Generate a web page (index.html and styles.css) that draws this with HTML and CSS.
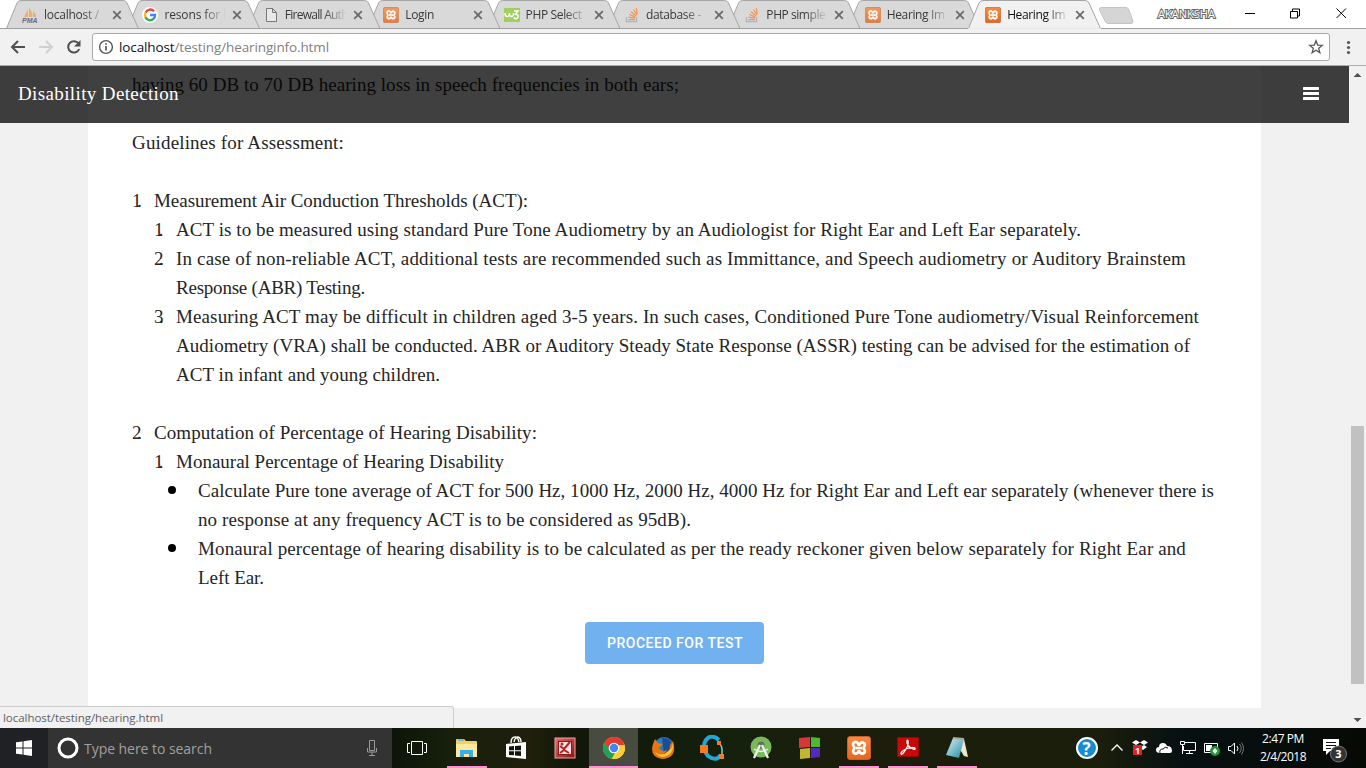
FILE: index.html
```html
<!DOCTYPE html>
<html lang="en">
<head>
<meta charset="utf-8">
<title>Hearing Impairment</title>
<link rel="stylesheet" href="styles.css">
</head>
<body>
<svg class="defs" width="0" height="0" aria-hidden="true">
  <defs>
    <linearGradient id="redg" x2="1" y2="1"><stop stop-color="#e66"/><stop offset="1" stop-color="#8c1414"/></linearGradient>
    <linearGradient id="org" x2="0" y2="1"><stop stop-color="#fb8a3c"/><stop offset="1" stop-color="#e8661b"/></linearGradient>
    <linearGradient id="note" x2="1" y2="1"><stop stop-color="#d9f2f6"/><stop offset=".6" stop-color="#6bb5c4"/><stop offset="1" stop-color="#2f7f94"/></linearGradient>
    <symbol id="xampp" viewBox="0 0 24 24">
      <rect x=".5" y=".5" width="23" height="23" rx="2.5" fill="url(#org)" stroke="#bf6430"/>
      <path d="M7.5 6.2a2.6 2.6 0 0 1 3.6 1.7c.3 1.4 1.5 1.4 1.8 0a2.6 2.6 0 0 1 4.9 1.5c-.2 1.4-1.3 1.5-1.3 2.6s1.1 1.200 1.300 2.600a2.600 2.600 0 0 1-4.900 1.500c-.3-1.400-1.500-1.400-1.800 0a2.600 2.600 0 0 1-4.900-1.500c.2-1.400 1.300-1.500 1.300-2.600s-1.100-1.200-1.300-2.600a2.600 2.600 0 0 1 1.300-3.200z" fill="none" stroke="#fff" stroke-width="2.700"/>
      <path d="M9 12h6" stroke="#fff" stroke-width="2.600"/>
    </symbol>
    <symbol id="stack" viewBox="0 0 16 16">
      <path d="M2.500 10v4.500h10V10" fill="none" stroke="#b3b3b3" stroke-width="1.300"/>
      <path d="M4.500 12.500h6.500M4.600 10.200l6.300 1M5.300 7.500l5.900 2.400M7 4.700l4.900 4M9.500 2.500l3.300 5.200M12.300 1.200l1 5.800" stroke="#f49350" stroke-width="1.200"/>
    </symbol>
    <symbol id="close" viewBox="0 0 10 10"><path d="M1.200 1.200l7.600 7.600M8.800 1.200L1.200 8.800" stroke="#686868" stroke-width="1.700"/></symbol>
    <path id="tab" d="M.5 28.500L11 3Q12.300.500 15 .500H117Q119.800.500 121 3L132.500 28.500" stroke="#a5a5a5"/>
  </defs>
</svg>

<div class="screen">
  <header class="strip">
    <svg class="shapes" width="1366" height="29" fill="#d9d9d9">
      <path d="M0 28.500H1366" stroke="#a0a0a0"/>
      <use href="#tab" x="847.500"/><use href="#tab" x="727.500"/><use href="#tab" x="607.500"/><use href="#tab" x="487.500"/><use href="#tab" x="367.500"/><use href="#tab" x="247.500"/><use href="#tab" x="127"/><use href="#tab" x="6"/>
      <path d="M0 28.500H970" stroke="#a0a0a0"/>
      <use href="#tab" x="968" fill="#f1f1f1"/>
      <path d="M968 29H1101" stroke="#f1f1f1" stroke-width="1.500"/>
      <path d="M1101 7.500H1126Q1128 7.500 1129 10L1133 21Q1133.500 23.500 1131 23.500H1108Q1106 23.500 1105 21L1099.500 10Q1099 7.500 1101 7.500Z" fill="#d5d5d5" stroke="#c4c4c4"/>
    </svg>
    <nav class="tabs">
      <div class="tab"><svg class="fav" viewBox="0 0 16 16"><path d="M2 10L6 2V10zM7 10V1q4 4 3 9zM11 10V4q4 4 3 6z" fill="#f3ae62"/><text x="0" y="15.500" class="pma">PMA</text></svg><span class="label"><span data-w="55">localhost /</span></span><svg class="x"><use href="#close"/></svg></div>
      <div class="tab"><svg class="fav" viewBox="0 0 16 16"><circle cx="8" cy="8" r="8" fill="#fff"/><g fill="none" stroke-width="2.300"><path d="M12 4.200A5 5 0 0 0 3.600 5.700" stroke="#ea4335"/><path d="M3.600 5.500a5 5 0 0 0 0 5" stroke="#fbbc05"/><path d="M3.500 10.300A5 5 0 0 0 11.500 11.900" stroke="#34a853"/><path d="M11.300 12A5 5 0 0 0 13.100 8H8" stroke="#4285f4"/></g></svg><span class="label"><span data-w="68">resons for la</span></span><svg class="x"><use href="#close"/></svg></div>
      <div class="tab"><svg class="fav" viewBox="0 0 16 16"><path d="M3.500 1.500h6l4 4v9h-10zM9.500 1.500v4h4" fill="#e8e8e8" stroke="#777"/></svg><span class="label"><span data-w="63">Firewall Auth</span></span><svg class="x"><use href="#close"/></svg></div>
      <div class="tab"><svg class="fav dim"><use href="#xampp"/></svg><span class="label"><span data-w="29">Login</span></span><svg class="x"><use href="#close"/></svg></div>
      <div class="tab"><svg class="fav" viewBox="0 0 16 16"><rect width="16" height="14" y="1" fill="#9fd05c"/><path d="M1 6q0 3.500 2.200 3.500T5.300 6q0 3.500 2.200 3.500T9.500 6M10 4h4l-2.500 3.300q3 0 2.500 2.700-1.500 3-4.300.7" fill="none" stroke="#fff" stroke-width="1.500"/></svg><span class="label"><span data-w="56">PHP Select</span></span><svg class="x"><use href="#close"/></svg></div>
      <div class="tab"><svg class="fav"><use href="#stack"/></svg><span class="label"><span data-w="55">database -</span></span><svg class="x"><use href="#close"/></svg></div>
      <div class="tab"><svg class="fav"><use href="#stack"/></svg><span class="label"><span data-w="59">PHP simple</span></span><svg class="x"><use href="#close"/></svg></div>
      <div class="tab"><svg class="fav dim"><use href="#xampp"/></svg><span class="label"><span data-w="58">Hearing Im</span></span><svg class="x"><use href="#close"/></svg></div>
      <div class="tab active"><svg class="fav"><use href="#xampp"/></svg><span class="label"><span data-w="58">Hearing Im</span></span><svg class="x"><use href="#close"/></svg></div>
    </nav>
    <div class="user"><span data-w="57">AKANKSHA</span></div>
    <svg class="winctl" width="110" height="28" fill="none" stroke="#000"><path d="M5 13.500h10M50.500 11.500h7v6.500h-7zM52.500 11V9h7v7h-2M96.500 8.500l9.500 9.500M106 8.500L96.500 18"/></svg>
  </header>

  <div class="toolbar">
    <svg class="navicons" width="92" height="36" fill="none" stroke-width="2"><path d="M25 18H12.500M18 12l-6 6 6 6" stroke="#505050"/><path d="M39 18h12.500M46 12l6 6-6 6" stroke="#d0d0d0"/><path d="M78.500 14.500A5.700 5.700 0 1 0 79.200 20" stroke="#505050"/><path d="M80.500 11v6.500H74z" fill="#505050"/></svg>
    <div class="url"><svg width="16" height="16" viewBox="0 0 16 16" fill="none" stroke="#555" stroke-width="1.400"><circle cx="8" cy="8" r="6.400"/><path d="M8 7v4.500M8 4.300v1.500" stroke-width="1.700"/></svg><span class="address" data-w="210">localhost<i>/testing/hearinginfo.html</i></span><svg width="16" height="16" viewBox="0 0 16 16"><path d="M8 1.800l1.700 4.300 4.600.3-3.600 2.900 1.200 4.500L8 11.300l-3.900 2.500 1.200-4.500-3.600-2.900 4.600-.3z" fill="none" stroke="#555" stroke-width="1.300"/></svg></div>
    <svg width="36" height="36" fill="#555"><circle cx="18.500" cy="13.500" r="1.600"/><circle cx="18.500" cy="18.500" r="1.600"/><circle cx="18.500" cy="23.500" r="1.600"/></svg>
  </div>

  <main class="viewport">
    <div class="page">
      <article class="sheet">
        <p><span data-w="547">having 60 DB to 70 DB hearing loss in speech frequencies in both ears;</span></p>
        <p class="gap"><span data-w="212">Guidelines for Assessment:</span></p>
        <div class="item gap"><b data-w="13">1.</b><p><span data-w="374">Measurement Air Conduction Thresholds (ACT):</span></p></div>
        <div class="item in1"><b data-w="12">1.</b><p><span data-w="905">ACT is to be measured using standard Pure Tone Audiometry by an Audiologist for Right Ear and Left Ear separately.</span></p></div>
        <div class="item in1"><b data-w="13">2.</b><p><span data-w="1010">In case of non-reliable ACT, additional tests are recommended such as Immittance, and Speech audiometry or Auditory Brainstem</span><br><span data-w="189">Response (ABR) Testing.</span></p></div>
        <div class="item in1"><b data-w="13">3.</b><p><span data-w="1023">Measuring ACT may be difficult in children aged 3-5 years. In such cases, Conditioned Pure Tone audiometry/Visual Reinforcement</span><br><span data-w="1014">Audiometry (VRA) shall be conducted. ABR or Auditory Steady State Response (ASSR) testing can be advised for the estimation of</span><br><span data-w="264">ACT in infant and young children.</span></p></div>
        <div class="item gap"><b data-w="13">2.</b><p><span data-w="383">Computation of Percentage of Hearing Disability:</span></p></div>
        <div class="item in1"><b data-w="12">1.</b><p><span data-w="328">Monaural Percentage of Hearing Disability</span></p></div>
        <div class="item in2"><em></em><p><span data-w="1016">Calculate Pure tone average of ACT for 500 Hz, 1000 Hz, 2000 Hz, 4000 Hz for Right Ear and Left ear separately (whenever there is</span><br><span data-w="493">no response at any frequency ACT is to be considered as 95dB).</span></p></div>
        <div class="item in2"><em></em><p><span data-w="988">Monaural percentage of hearing disability is to be calculated as per the ready reckoner given below separately for Right Ear and</span><br><span data-w="66">Left Ear.</span></p></div>
        <a class="proceed" href="#"><span data-w="136">PROCEED FOR TEST</span></a>
      </article>
      <div class="navbar"><span class="brand" data-w="161">Disability Detection</span><svg width="16" height="13" fill="#fff"><rect width="16" height="3" rx=".5"/><rect y="5" width="16" height="3" rx=".5"/><rect y="10" width="16" height="3" rx=".5"/></svg></div>
      <div class="status"><span data-w="160">localhost/testing/hearing.html</span></div>
    </div>
    <div class="scroll"><svg width="17" height="17"><path d="M4.500 11h8L8.500 7z" fill="#505050"/></svg><div class="thumb"></div><svg width="17" height="17"><path d="M4.500 7h8L8.500 11z" fill="#505050"/></svg></div>
  </main>

  <footer class="taskbar">
    <div class="start"><svg width="16" height="16" fill="#fff"><path d="M0 2.300L6.500 1.400V7.500H0zM7.500 1.200L16 0V7.500H7.500zM0 8.500H6.500V14.600L0 13.700zM7.500 8.500H16V16L7.500 14.800z"/></svg></div>
    <div class="search"><svg width="22" height="22"><circle cx="11" cy="11" r="9" fill="none" stroke="#fff" stroke-width="3"/></svg><span data-w="128">Type here to search</span><svg class="mic" width="12" height="18" fill="none" stroke="#999"><path d="M3.500 1.500h5v10h-5zM1.500 9v4h9V9M6 13v3M3 16.500h6"/></svg></div>
    <div class="apps">
      <div class="app view"><svg width="22" height="16" fill="none" stroke="#fff"><path d="M5.500 1.500h11v13h-11zM4 3.500H1.500v9H4M18 3.500h2.500v9H18"/></svg></div>
      <div class="app open"><svg width="24" height="24"><path d="M1 4q0-1 1-1h7l2 2h10q1 0 1 1v15H1z" fill="#f4cf68"/><path d="M3 4h6" stroke="#52b5e9" stroke-width="1.500"/><path d="M1 8h21v13H1z" fill="#ffe79b"/><path d="M5 21v-7h13v7h-4v-3H9v3z" fill="#33b1e8"/></svg></div>
      <div class="app"><svg width="24" height="26"><path d="M2 9l20-2v17L2 22z" fill="#fff"/><path d="M7 8q0-6 4-6 3 0 4 5M10 7q1-5 4-5 3 1 3 5" fill="none" stroke="#fff" stroke-width="1.400"/><path d="M5 11.500l5-.5v4.300H5zM11 11l6-.6v4.900h-6zM5 16.300h5v4l-5-.4zM11 16.300h6v4.700l-6-.6z" fill="#101608"/></svg></div>
      <div class="app"><svg width="22" height="22"><rect x="1" y="1" width="20" height="20" fill="url(#redg)" stroke="#e9aaaa"/><rect x="4.500" y="4.500" width="13" height="13" fill="#f4e6e6" stroke="#8b1818"/><path d="M6 9l4 3 6-7M6 16l4-3 5 3" fill="none" stroke="#b42020" stroke-width="2"/><circle cx="8" cy="7" r="1.500" fill="#b42020"/></svg></div>
      <div class="app open current"><svg width="22" height="22"><circle cx="11" cy="11" r="11" fill="#fbd036"/><path d="M11 11H21.900A11 11 0 0 0 1.500 5.500L6 13z" fill="#e33b2e"/><path d="M11 6H20.800A11 11 0 0 0 1.500 5.500z" fill="#e33b2e"/><path d="M1.500 5.500L7 14l5 2-3 6A11 11 0 0 1 1.500 5.500z" fill="#22a055"/><path d="M16 8h5.600A11 11 0 0 1 9 21.800z" fill="#fbd036"/><circle cx="11" cy="11" r="5.300" fill="#fff"/><circle cx="11" cy="11" r="4.200" fill="#4285f4"/></svg></div>
      <div class="app"><svg width="24" height="24"><circle cx="13" cy="11" r="10" fill="#247fc3"/><path d="M11 2q9-1 10 8t-8 8z" fill="#1a4d91"/><path d="M4 3l3 4 5 1-4 4q3 5 8 2-2 5-7 4Q19 20 19 9l3-4q5 17-11 18Q-2 21 2 8z" fill="#e87516"/><path d="M22 7q1 13-11 14Q6 20 4 16q6 5 12 0 5-3 6-9z" fill="#ffc62d"/></svg></div>
      <div class="app"><svg width="26" height="26"><path d="M20 5Q12-2 7 5T9 21q8 6 13-1" fill="none" stroke="#23a7d7" stroke-width="4"/><path d="M19 6q5 5 4 13" fill="none" stroke="#75cae6" stroke-width="1.500"/><path d="M1 10h8v8H1zM18 6h4v4h-4zM20 19h5v5h-5z" fill="#f47b20"/></svg></div>
      <div class="app"><svg width="22" height="24"><circle cx="11" cy="11" r="10.500" fill="#79b957"/><circle cx="11" cy="9" r="3.500" fill="#62705d"/><path d="M10 9L4 22M12 9l6 13" stroke="#eee" stroke-width="2.300"/><path d="M4 13q7 5 14 0" fill="none" stroke="#eee" stroke-width="1.500"/></svg></div>
      <div class="app"><svg width="24" height="26"><path d="M1 3l11-1v10L1 13z" fill="#d73737"/><path d="M13 2l9 1v9H13z" fill="#4cb92f"/><path d="M2 14l10-1v10L2 24z" fill="#c2b631"/><path d="M13 13h9v9l-9 1z" fill="#552abb"/></svg></div>
      <div class="app open"><svg width="24" height="24"><use href="#xampp"/></svg></div>
      <div class="app open adobe"><svg width="22" height="20"><rect width="22" height="20" fill="#c90808" stroke="#680404"/><path d="M4 16q1-3 8-5 7-1 6 1-1 1-4-1-4-3-4-6 0-3 1-1 1 5-4 11-3 4-3 1z" fill="none" stroke="#fff" stroke-width="1.300"/></svg></div>
      <div class="app open"><svg width="24" height="24"><path d="M8 2l11 1 4 18-4-1z" fill="#eee7ce"/><path d="M8 2l11 1-5 19-13-3z" fill="url(#note)"/><path d="M8 2l11 1" stroke="#acaaa0" stroke-width="2"/></svg></div>
    </div>
    <div class="tray">
      <svg width="24" height="24"><circle cx="12" cy="12" r="10" fill="#168dd3" stroke="#fff" stroke-width="2"/><text x="7.500" y="18.500" class="question">?</text></svg>
      <svg class="caret" width="14" height="10"><path d="M1.500 7.500L7 2l5.500 5.500" fill="none" stroke="#fff" stroke-width="1.300"/></svg>
      <svg width="18" height="18"><path d="M5 1l4 2.500L5 6 1 3.500zM13 1l4 2.500L13 6 9 3.500zM13 6l3 2-4 3-3-2.500z" fill="#fff"/><rect x="2" y="6" width="9" height="10" fill="#d92525"/><text x="4" y="14.500" class="count">1</text></svg>
      <svg width="18" height="18"><path d="M1 11q0-3 3-3 0-4 4-4 3 0 4 3 5 0 5 5 0 2-2 2H5q-4 0-4-3z" fill="#fff"/><path d="M5 14q-1-4 3-4 2-3 5-1" fill="none" stroke="#111"/></svg>
      <svg width="18" height="18" fill="none" stroke="#fff"><path d="M6 3.500h10.500v8H4.500V7M10.500 11.500v3M7 14.500h7M1.500 2.500h4v3h-4zM3.500 6v9"/></svg>
      <svg width="18" height="18"><path d="M1.500 4.500h13v9h-13z" fill="none" stroke="#fff"/><path d="M3 6h6v6H3z" fill="#fff"/><circle cx="12" cy="12" r="5" fill="#1b9738"/><path d="M12 9l2.500 3-2.500 3-2.500-3z" fill="#fff"/></svg>
      <svg width="18" height="18" fill="none" stroke="#fff"><path d="M1.500 7.500H4L7.500 4v11L4 11.500H1.500z"/><path d="M10 7q2 2.500 0 5"/><path d="M12.500 5q3.500 4.500 0 9M14.500 3.500q4 6 0 12" stroke="#777"/></svg>
    </div>
    <div class="clock"><span data-w="42">2:47 PM</span><span data-w="46">2/4/2018</span></div>
    <svg class="notice" width="28" height="28"><path d="M1 3h16v12H8l-4 4v-4H1z" fill="#fff"/><path d="M4 6.500h10M4 9.500h10M4 12.500h5" stroke="#111"/><circle cx="16.500" cy="18" r="8" fill="#333" stroke="#777"/><text x="13.300" y="22.300" class="three">3</text></svg>
  </footer>
</div>
<script src="fit.js"></script>
</body>
</html>
```

FILE: fit.js
```js
// Spread each label's letters so that it fills its measured width.
document.querySelectorAll('[data-w]').forEach(function (el) {
  var natural = el.getBoundingClientRect().width;
  var gap = (Number(el.dataset.w) - natural) / el.textContent.length;
  el.style.letterSpacing = gap.toFixed(4) + 'px';
});
```

FILE: styles.css
```css
* { box-sizing: border-box; }
body { margin: 0; overflow: hidden; font-family: "Open Sans", "Noto Sans", sans-serif; }
svg { flex: none; display: block; }
.defs { position: absolute; }
.screen { width: 1366px; height: 768px; display: flex; flex-direction: column; background: #fff; }
[data-w] { white-space: nowrap; }

.strip { height: 29px; flex: none; display: flex; position: relative; }
.shapes { position: absolute; left: 0; top: 0; }
.tabs { display: flex; padding-left: 22px; width: 1149px; position: relative; }
.tab { width: 120.4px; flex: none; display: flex; align-items: center; padding-bottom: 0; font-size: 12px; color: #3a3a3a; }
.fav { width: 16px; height: 16px; }
.dim { opacity: .8; }
.label { width: 62px; margin-left: 6px; overflow: hidden; white-space: nowrap; line-height: 20px; -webkit-mask-image: linear-gradient(90deg, #000 62%, transparent); mask-image: linear-gradient(90deg, #000 62%, transparent); }
.x { width: 10px; height: 10px; margin-left: 6px; }
.active { color: #111; }
.pma { font: italic bold 7px "Liberation Sans", sans-serif; fill: #66678e; }
.user { width: 90px; padding: 5px 0 0 9px; font-size: 11px; line-height: 17px; color: #fff; -webkit-text-stroke: 2px #666; paint-order: stroke fill; position: relative; }
.winctl { position: relative; margin-left: 1px; }

.toolbar { height: 37px; flex: none; background: #f1f1f1; border-bottom: 1px solid #adadad; display: flex; }
.url { width: 1238px; height: 28px; margin-top: 4px; border: 1px solid #a9a9a9; border-radius: 3px; background: #fff; display: flex; align-items: center; padding: 0 5px; }
.address { flex: none; font-size: 13.5px; line-height: 24px; color: #111; margin: 0 auto 0 5px; }
.address i { font-style: normal; color: #808080; }

.viewport { height: 662px; flex: none; display: flex; }
.page { width: 1349px; height: 662px; background: #f1f1f1; position: relative; }
.sheet { width: 1173px; height: 642px; margin-left: 88px; background: #fff; padding: 4px 0 0 44px; font: 19px/29px "Liberation Serif", serif; color: #252525; display: flex; flex-direction: column; }
.sheet p { margin: 0; white-space: nowrap; }
.sheet .gap { margin-top: 29px; }
.item { display: flex; }
.item b { width: 22px; flex: none; font-weight: 400; }
.in1 { padding-left: 22px; }
.in2 { padding-left: 36px; }
.item em { width: 8px; height: 8px; border-radius: 50%; background: #000; margin: 10px 22px 0 0; flex: none; }
.proceed { width: 179px; height: 42px; margin: 30px 0 0 453px; border-radius: 4px; background: #72b1f0; color: #fff; text-decoration: none; font: 500 14px/42px Roboto, sans-serif; padding-left: 22px; }
.navbar { position: absolute; left: 0; top: 0; width: 1349px; height: 57px; background: rgba(0,0,0,.75); display: flex; align-items: center; justify-content: space-between; padding: 0 30px 2px 18px; }
.brand { font: 19px/29px "Liberation Serif", serif; color: #fff; }
.status { position: absolute; left: 0; bottom: 0; width: 454px; height: 22px; border: 1px solid #ccc; border-width: 1px 1px 0 0; border-radius: 0 3px 0 0; background: #f1f1f1; padding-left: 3px; font-size: 11.5px; line-height: 22px; color: #606060; }
.scroll { width: 17px; background: #f1f1f1; display: flex; flex-direction: column; }
.thumb { width: 13px; height: 258px; background: #c1c1c1; margin: 343px 2px 27px; flex: none; }

.taskbar { height: 40px; flex: none; display: flex; background: linear-gradient(90deg, #0c1508 392px, #17200c 450px, #201f0c 530px, #111809 570px, #15200d 740px, #1c1d0b 860px, #1b1e0b 1100px, #071012 1180px, #060a05 1366px); }
.start { width: 48px; background: #202124; display: flex; align-items: center; justify-content: center; }
.search { width: 344px; background: #333; display: flex; align-items: center; padding-left: 9px; font-size: 14px; color: #a0a0a0; }
.search span { margin-left: 5px; }
.mic { margin: 0 14px 0 auto; }
.apps { display: flex; width: 683px; }
.app { width: 49px; height: 40px; flex: none; display: flex; align-items: center; justify-content: center; position: relative; }
.view { margin-right: 1px; }
.open::after { content: ""; position: absolute; left: 5px; bottom: 0; width: 40px; height: 2px; background: #ff91d0; }
.current { background: #474b40; background-clip: content-box; }
.current::after { left: 0; width: 49px; }
.adobe svg { margin-bottom: 2px; }
.tray { display: flex; align-items: center; width: 180px; gap: 6px; }
.tray .caret { margin: 0 1px 0 5px; }
.question { font: bold 17px "Open Sans", sans-serif; fill: #fff; }
.count { font: bold 9px "Open Sans", sans-serif; fill: #fff; }
.clock { width: 62px; margin-left: -3px; display: flex; flex-direction: column; align-items: center; justify-content: center; font-size: 12px; line-height: 18px; color: #fff; }
.notice { margin: 8px 0 0 8px; }
.three { font: bold 11px "Open Sans", sans-serif; fill: #fff; }
```
